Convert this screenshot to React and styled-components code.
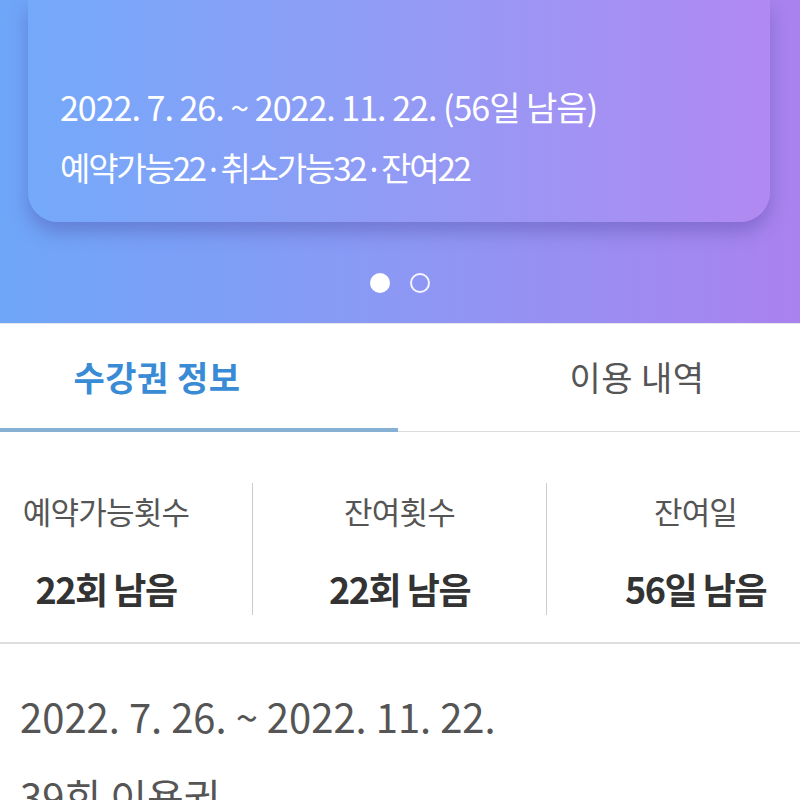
import styled, { createGlobalStyle } from 'styled-components'

const GlobalStyle = createGlobalStyle`
  html, body {
    margin: 0;
    padding: 0;
    background: #ffffff;
  }
  body {
    font-family: "Noto Sans CJK KR", "Noto Sans", sans-serif;
    overflow: hidden;
  }
`

const Page = styled.div`
  width: 800px;
  height: 800px;
  overflow: hidden;
  background: #fff;
`

const Hero = styled.section`
  height: 323px;
  background: linear-gradient(90deg, #6ea6f8 0%, #8c98f4 50%, #aa82ef 100%);
  border-bottom: 1px solid #e6e6ee;
  display: flex;
  flex-direction: column;
`

const Card = styled.div`
  margin: 0 30px 0 28px;
  height: 222px;
  box-sizing: border-box;
  padding: 86px 0 0 32px;
  border-radius: 0 0 30px 30px;
  background: linear-gradient(90deg, #74a9fa 0%, #929bf5 50%, #b189f1 100%);
  box-shadow: 0 10px 18px rgba(70, 60, 150, 0.35);
  color: #fff;
`

const CardLine = styled.div`
  font-size: ${p => p.size || 34}px;
  line-height: 42px;
  letter-spacing: ${p => p.spacing || -1}px;
  margin-top: ${p => p.gap || 0}px;
  white-space: nowrap;
`

const Sep = styled.span`
  font-family: "Noto Sans", sans-serif;
  margin: 0 5px 0 4px;
`

const Dots = styled.div`
  display: flex;
  justify-content: center;
  gap: 20px;
  margin-top: 51px;
`

const Dot = styled.span`
  width: 20px;
  height: 20px;
  box-sizing: border-box;
  border-radius: 50%;
  background: ${p => (p.active ? '#ffffff' : 'transparent')};
  border: 2px solid #ffffff;
  opacity: ${p => (p.active ? 1 : 0.9)};
`

const Tabs = styled.nav`
  display: flex;
  height: 108px;
  box-sizing: border-box;
  border-bottom: 1px solid #dcdcdc;
`

const Tab = styled.div`
  flex: 1;
  display: flex;
  align-items: center;
  justify-content: center;
  box-sizing: border-box;
  padding: ${p => (p.active ? '0 84px 0 0' : '0 0 0 76px')};
  font-size: 34px;
  letter-spacing: 0.5px;
  font-weight: ${p => (p.active ? 700 : 400)};
  color: ${p => (p.active ? '#3a8bd5' : '#555555')};
  border-bottom: 4px solid ${p => (p.active ? '#86b0d4' : 'transparent')};
  margin-bottom: -1px;
`

const TabsLeft = styled(Tab)`
  flex: 0 0 398px;
`

const Stats = styled.section`
  display: grid;
  grid-template-columns: 252px 294px 1fr;
  padding: 51px 0 27px;
  border-bottom: 2px solid #dddddd;
`

const Stat = styled.div`
  height: 132px;
  box-sizing: border-box;
  padding: ${p => p.pad};
  border-left: ${p => (p.first ? 'none' : '1px solid #cccccc')};
  display: flex;
  flex-direction: column;
  align-items: center;
`

const StatLabel = styled.div`
  margin-top: 8px;
  font-size: 31px;
  line-height: 40px;
  letter-spacing: -0.8px;
  color: #555555;
`

const StatValue = styled.div`
  margin-top: 35px;
  font-size: 36px;
  line-height: 44px;
  font-weight: 700;
  letter-spacing: -1.5px;
  color: #333333;
`

const Detail = styled.section`
  padding: 47px 20px 0;
  color: #555555;
`

const DetailLine = styled.div`
  font-size: 40px;
  line-height: 50px;
  letter-spacing: 0;
  margin-top: ${p => p.gap || 0}px;
  white-space: nowrap;
`

const stats = [
  { label: '예약가능횟수', value: '22회 남음', pad: '0 40px 0 0' },
  { label: '잔여횟수', value: '22회 남음', pad: '0' },
  { label: '잔여일', value: '56일 남음', pad: '0 0 0 44px' },
]

export default function App() {
  return (
    <Page>
      <GlobalStyle />
      <Hero>
        <Card>
          <CardLine>2022. 7. 26. ~ 2022. 11. 22. (56일 남음)</CardLine>
          <CardLine gap={18} size={33} spacing={-2.2}>
            예약가능22<Sep>·</Sep>취소가능32<Sep>·</Sep>잔여22
          </CardLine>
        </Card>
        <Dots>
          <Dot active />
          <Dot />
        </Dots>
      </Hero>
      <Tabs>
        <TabsLeft active>수강권 정보</TabsLeft>
        <Tab>이용 내역</Tab>
      </Tabs>
      <Stats>
        {stats.map((s, i) => (
          <Stat key={s.label} first={i === 0} pad={s.pad}>
            <StatLabel>{s.label}</StatLabel>
            <StatValue>{s.value}</StatValue>
          </Stat>
        ))}
      </Stats>
      <Detail>
        <DetailLine>2022. 7. 26. ~ 2022. 11. 22.</DetailLine>
        <DetailLine gap={30}>39회 이용권</DetailLine>
      </Detail>
    </Page>
  )
}
